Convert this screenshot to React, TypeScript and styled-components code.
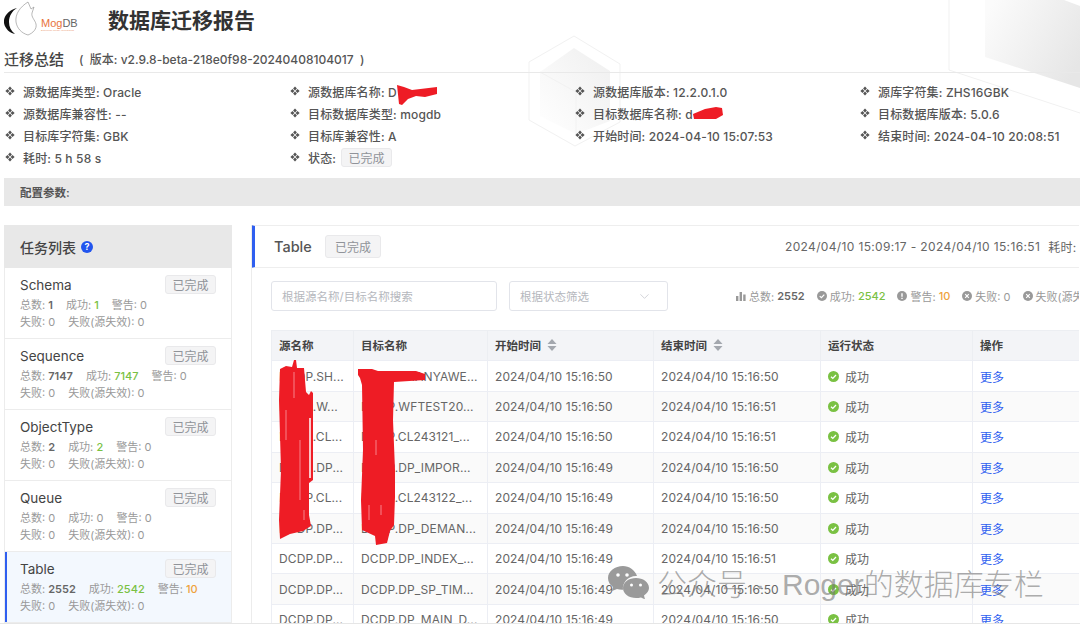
import React from "react";
import styled, { createGlobalStyle } from "styled-components";
import { ChevronDown } from "lucide-react";

const Global = createGlobalStyle`
  html, body { margin: 0; padding: 0; background: #fff; overflow: hidden; }
  body { font-family: Inter, "Noto Sans CJK SC", sans-serif; width: 1080px; height: 626px; }
  * { box-sizing: border-box; }
`;

const Page = styled.div`
  position: relative;
  width: 1080px;
  height: 626px;
  padding-left: 4px;
  overflow: hidden;
`;
const Backdrop = styled.svg`
  position: absolute;
  left: 0;
  top: 0;
  z-index: 0;
  pointer-events: none;
`;
const Overlay = styled.svg`
  position: absolute;
  left: 0;
  top: 0;
  z-index: 3;
  pointer-events: none;
`;
const Content = styled.div`
  position: relative;
  z-index: 1;
`;
const Header = styled.header`
  display: flex;
  align-items: center;
  height: 38px;
`;
const Logo = styled.div`
  display: flex;
  align-items: center;
  width: 104px;
  flex: none;
`;
const LogoWords = styled.div`
  display: flex;
  flex-direction: column;
  margin: 13px 0 0 3px;
`;
const LogoName = styled.span`
  font-family: "Liberation Sans", sans-serif;
  font-size: 11px;
  line-height: 11px;
  color: #e8733c;
  b { font-weight: 400; color: #666; }
`;
const LogoSub = styled.span`
  font-family: "Liberation Sans", sans-serif;
  font-size: 2.5px;
  line-height: 4px;
  color: #eb9a72;
  white-space: nowrap;
`;
const Title = styled.h1`
  margin: 0;
  font-size: 21px;
  font-weight: 700;
  color: #333;
`;
const SummaryHead = styled.div`
  display: flex;
  align-items: center;
  height: 35px;
  padding-top: 7px;
  border-bottom: 1px solid #e9e9e9;
`;
const SummaryTitle = styled.span`
  font-size: 15px;
  font-weight: 500;
  color: #444;
  margin-right: 15px;
`;
const Version = styled.span`
  font-size: 12px;
  font-weight: 500;
  color: #555;
  white-space: pre;
`;
const InfoGrid = styled.div`
  display: grid;
  grid-template-columns: repeat(4, 285px);
  grid-auto-rows: 22px;
  padding-top: 7px;
  height: 105px;
`;
const InfoItem = styled.div`
  display: flex;
  align-items: center;
  font-size: 12px;
  letter-spacing: 0.15px;
  font-weight: 500;
  color: #555;
  white-space: pre;
`;
const DiamondSvg = styled.svg`
  flex: none;
  margin: 0 8px 0 1px;
`;
const Tag = styled.span<{ $large?: boolean }>`
  display: inline-flex;
  align-items: center;
  justify-content: center;
  flex: none;
  width: ${(p) => (p.$large ? "56px" : "51px")};
  height: ${(p) => (p.$large ? "23px" : "19px")};
  background: #f4f4f5;
  border: 1px solid #e9e9eb;
  border-radius: 3px;
  font-size: 12px;
  font-weight: 400;
  letter-spacing: 0;
  color: #909399;
`;
const StateTag = styled(Tag)`
  margin-left: 5px;
`;
const ConfigBar = styled.div`
  display: flex;
  align-items: center;
  height: 28px;
  padding-left: 16px;
  background: #e8e8e8;
  font-size: 11.5px;
  font-weight: 600;
  color: #555;
`;
const Body = styled.div`
  display: flex;
  gap: 19px;
  height: 398px;
  margin-top: 19px;
`;
const Sidebar = styled.aside`
  display: flex;
  flex-direction: column;
  flex: none;
  width: 228px;
  height: 398px;
  border: 1px solid #ececec;
  border-top: 0;
`;
const SideHead = styled.div`
  display: flex;
  align-items: center;
  gap: 5px;
  flex: none;
  height: 43px;
  margin: 0 -1px;
  padding-left: 16px;
  background: #e8e8e8;
  font-size: 14px;
  font-weight: 500;
  color: #444;
`;
const Help = styled.span`
  display: inline-flex;
  align-items: center;
  justify-content: center;
  width: 12px;
  height: 12px;
  border-radius: 50%;
  background: #2255ee;
  color: #fff;
  font-size: 9px;
  font-weight: 700;
`;
const Task = styled.div<{ $active?: boolean }>`
  flex: 1;
  padding: 7px 15px 0 ${(p) => (p.$active ? "13px" : "15px")};
  background: ${(p) => (p.$active ? "#f3f8fe" : "#fff")};
  border-left: ${(p) => (p.$active ? "2px solid #2f5ff0" : "0")};
  border-bottom: 1px solid #ececec;
  &:last-child { border-bottom: 0; }
`;
const TaskTop = styled.div`
  display: flex;
  align-items: center;
  justify-content: space-between;
  height: 19px;
  margin-bottom: 1px;
`;
const TaskName = styled.span`
  font-size: 13.5px;
  color: #444;
`;
const StatLine = styled.div`
  display: flex;
  gap: 13px;
  height: 17px;
  align-items: center;
  font-size: 11px;
  color: #999;
  white-space: nowrap;
`;
const Num = styled.b<{ $tone?: "ok" | "warn" }>`
  font-weight: ${(p) => (p.$tone ? 500 : 600)};
  color: ${(p) => (p.$tone === "ok" ? "#7ac143" : p.$tone === "warn" ? "#efa23c" : "#666")};
`;
const Zero = styled.span`
  font-weight: 400;
`;
const Main = styled.main`
  flex: none;
  width: 828px;
  height: 398px;
  border-left: 1px solid #ececec;
  overflow: hidden;
`;
const MainHead = styled.div`
  display: flex;
  align-items: center;
  height: 43px;
  border-top: 1px solid #eee;
  border-bottom: 1px solid #eee;
  border-left: 4px solid #2f5ff0;
  margin-left: -1px;
  padding-left: 19px;
  white-space: nowrap;
`;
const MainName = styled.span`
  flex: none;
  font-size: 14.5px;
  font-weight: 500;
  color: #555;
  width: 51px;
`;
const TimeText = styled.span`
  flex: none;
  font-size: 12px;
  letter-spacing: 0.35px;
  color: #666;
  margin-left: 404px;
`;
const DurationText = styled(TimeText)`
  margin-left: 8px;
`;
const FilterRow = styled.div`
  display: flex;
  align-items: center;
  height: 30px;
  margin-top: 13px;
  padding-left: 19px;
  white-space: nowrap;
`;
const Field = styled.div<{ $w: number; $mr: number }>`
  display: flex;
  align-items: center;
  justify-content: space-between;
  flex: none;
  width: ${(p) => p.$w}px;
  height: 30px;
  margin-right: ${(p) => p.$mr}px;
  padding: 0 15px 0 10px;
  border: 1px solid #e2e4ea;
  border-radius: 3px;
  font-size: 11.5px;
  color: #b5b7bd;
`;
const Stat = styled.span`
  display: inline-flex;
  align-items: center;
  gap: 3px;
  margin-right: 12px;
  font-size: 11px;
  color: #999;
  flex: none;
`;
const TableWrap = styled.div`
  margin: 19px 0 0 19px;
`;
const cols = "82px 134px 166px 167px 152px 1fr";
const HeadRow = styled.div`
  display: grid;
  grid-template-columns: ${cols};
  height: 30.4px;
  background: #f3f4f7;
  border-top: 1px solid #eceef2;
`;
const Row = styled.div<{ $alt?: boolean }>`
  display: grid;
  grid-template-columns: ${cols};
  height: 30.43px;
  background: ${(p) => (p.$alt ? "#fafafa" : "#fff")};
  border-top: 1px solid #eceef4;
`;
const HeadCell = styled.div`
  display: flex;
  align-items: center;
  gap: 6px;
  padding: 0 0 2px 7px;
  border-left: 1px solid #eceef2;
  font-size: 11.5px;
  font-weight: 600;
  color: #444;
`;
const Cell = styled.div`
  display: flex;
  align-items: center;
  gap: 6px;
  padding-left: 7px;
  border-left: 1px solid #eceef4;
  font-size: 12px;
  letter-spacing: 0.1px;
  color: #666;
  white-space: nowrap;
  overflow: hidden;
`;
const More = styled.a`
  color: #2f5ff0;
  font-size: 12px;
`;
const Watermark = styled.div`
  position: absolute;
  left: 608px;
  top: 562px;
  z-index: 4;
  display: flex;
  align-items: center;
  gap: 8px;
  height: 40px;
  font-family: "Liberation Sans", "Noto Sans CJK SC", sans-serif;
  font-size: 30px;
  font-weight: 300;
  color: rgba(120, 120, 120, 0.62);
  white-space: pre;
`;
const BottomLine = styled.div`
  position: absolute;
  left: 0;
  right: 0;
  top: 623px;
  height: 3px;
  background: #fff;
  border-top: 1px solid #e6e6e6;
  z-index: 2;
`;

const Diamond = () => (
  <DiamondSvg width="10" height="10" viewBox="0 0 10 10" fill="#555">
    <path d="M5 .4 6.9 2.5 5 4.4 3.1 2.5Z" />
    <path d="M5 5.6 6.9 7.5 5 9.6 3.1 7.5Z" />
    <path d="M.4 5 2.5 3.1 4.4 5 2.5 6.9Z" />
    <path d="M9.6 5 7.5 3.1 5.6 5 7.5 6.9Z" />
  </DiamondSvg>
);

const Check = () => (
  <svg width="11" height="11" viewBox="0 0 11 11">
    <circle cx="5.5" cy="5.5" r="5.5" fill="#7ac143" />
    <path d="M3 5.7 4.8 7.4 8 4" fill="none" stroke="#fff" strokeWidth="1.3" />
  </svg>
);
const GrayOk = () => (
  <svg width="10" height="10" viewBox="0 0 10 10">
    <circle cx="5" cy="5" r="5" fill="#999" />
    <path d="M2.7 5.1 4.4 6.7 7.3 3.6" fill="none" stroke="#fff" strokeWidth="1.2" />
  </svg>
);
const GrayWarn = () => (
  <svg width="10" height="10" viewBox="0 0 10 10">
    <circle cx="5" cy="5" r="5" fill="#999" />
    <path d="M5 2.2V5.8M5 6.8V8" stroke="#fff" strokeWidth="1.4" />
  </svg>
);
const GrayX = () => (
  <svg width="10" height="10" viewBox="0 0 10 10">
    <circle cx="5" cy="5" r="5" fill="#999" />
    <path d="M3.2 3.2 6.8 6.8M6.8 3.2 3.2 6.8" stroke="#fff" strokeWidth="1.2" />
  </svg>
);
const Bars = () => (
  <svg width="10" height="10" viewBox="0 0 10 10" fill="#999">
    <rect x="0" y="5" width="2.4" height="5" />
    <rect x="3.6" y="1" width="2.4" height="9" />
    <rect x="7.2" y="3.5" width="2.4" height="6.5" />
  </svg>
);
const Sort = () => (
  <svg width="10" height="12" viewBox="0 0 10 12" fill="#a3a7ae">
    <path d="M5 0 9.5 5H.5Z" />
    <path d="M5 12 .5 7H9.5Z" />
  </svg>
);

const info: [string, string][] = [
  ["源数据库类型", "Oracle"],
  ["源数据库名称", "D"],
  ["源数据库版本", "12.2.0.1.0"],
  ["源库字符集", "ZHS16GBK"],
  ["源数据库兼容性", "--"],
  ["目标数据库类型", "mogdb"],
  ["目标数据库名称", "d"],
  ["目标数据库版本", "5.0.6"],
  ["目标库字符集", "GBK"],
  ["目标库兼容性", "A"],
  ["开始时间", "2024-04-10 15:07:53"],
  ["结束时间", "2024-04-10 20:08:51"],
  ["耗时", "5 h 58 s"],
];

const tasks = [
  { name: "Schema", total: "1", ok: "1", warn: "0" },
  { name: "Sequence", total: "7147", ok: "7147", warn: "0" },
  { name: "ObjectType", total: "2", ok: "2", warn: "0" },
  { name: "Queue", total: "0", ok: "0", warn: "0" },
  { name: "Table", total: "2552", ok: "2542", warn: "10", active: true },
];

const rows = [
  ["DCDP.SH...", "DCDP.SHANYAWE...", "15:16:50", "15:16:50"],
  ["DCDP.W...", "DCDP.WFTEST20...", "15:16:50", "15:16:51"],
  ["DCDP.CL...", "DCDP.CL243121_...", "15:16:50", "15:16:51"],
  ["DCDP.DP...", "DCDP.DP_IMPOR...", "15:16:49", "15:16:50"],
  ["DCDP.CL...", "DCDP.CL243122_...", "15:16:49", "15:16:50"],
  ["DCDP.DP...", "DCDP.DP_DEMAN...", "15:16:49", "15:16:50"],
  ["DCDP.DP...", "DCDP.DP_INDEX_...", "15:16:49", "15:16:51"],
  ["DCDP.DP...", "DCDP.DP_SP_TIM...", "15:16:49", "15:16:50"],
  ["DCDP.DP...", "DCDP.DP_MAIN_D...", "15:16:49", "15:16:50"],
];

export default function App() {
  return (
    <Page>
      <Global />
      <Backdrop width="1080" height="226" viewBox="0 0 1080 226">
        <defs>
          <linearGradient id="cube" x1="1" y1="0" x2="0" y2="1">
            <stop offset="0" stopColor="#efefef" />
            <stop offset="1" stopColor="#ffffff" />
          </linearGradient>
          <linearGradient id="big" x1="1" y1="0.7" x2="0" y2="0.2">
            <stop offset="0" stopColor="#e6e6e6" />
            <stop offset="1" stopColor="#fbfbfb" />
          </linearGradient>
        </defs>
        <path d="M574 36 620 64V122L575 146 529 120V62Z" fill="none" stroke="#f1f1f1" />
        <path d="M574 48 610 71V121L576 134 540 116V72Z" fill="url(#cube)" />
        <path d="M540 72 576 92V134" fill="none" stroke="#f2f2f2" />
        <path d="M949 0V70L1080 113" fill="none" stroke="#f1f1f1" />
        <path d="M985 0V57L1080 88V6L1064 0Z" fill="url(#big)" />
      </Backdrop>
      <Content>
        <Header>
          <Logo>
            <svg width="34" height="36" viewBox="0 0 34 36">
              <path d="M13 7C5 9-1 15 0 22c1 6 6 10 11 11-4-3-6-7-6-12 0-6 3-11 8-14Z" fill="#111" />
              <path d="M24 1c-8 5-13 12-12 20 1 6 5 11 12 13 5-2 9-6 8-11-1-4-5-7-4-11l2-6-3 2Z" fill="none" stroke="#888" strokeWidth="0.6" />
            </svg>
            <LogoWords>
              <LogoName>Mog<b>DB</b></LogoName>
              <LogoSub>Enterprise-Ready openGauss</LogoSub>
            </LogoWords>
          </Logo>
          <Title>数据库迁移报告</Title>
        </Header>
        <SummaryHead>
          <SummaryTitle>迁移总结</SummaryTitle>
          <Version>(  版本: v2.9.8-beta-218e0f98-20240408104017  )</Version>
        </SummaryHead>
        <InfoGrid>
          {info.map(([k, v]) => (
            <InfoItem key={k}>
              <Diamond />
              {k}: {v}
            </InfoItem>
          ))}
          <InfoItem>
            <Diamond />
            状态:
            <StateTag>已完成</StateTag>
          </InfoItem>
        </InfoGrid>
        <ConfigBar>配置参数:</ConfigBar>
        <Body>
          <Sidebar>
            <SideHead>
              任务列表<Help>?</Help>
            </SideHead>
            {tasks.map((t) => (
              <Task key={t.name} $active={t.active}>
                <TaskTop>
                  <TaskName>{t.name}</TaskName>
                  <Tag>已完成</Tag>
                </TaskTop>
                <StatLine>
                  <span>总数: {t.total === "0" ? <Zero>0</Zero> : <Num>{t.total}</Num>}</span>
                  <span>成功: {t.ok === "0" ? <Zero>0</Zero> : <Num $tone="ok">{t.ok}</Num>}</span>
                  <span>警告: {t.warn === "0" ? <Zero>0</Zero> : <Num $tone="warn">{t.warn}</Num>}</span>
                </StatLine>
                <StatLine>
                  <span>失败: 0</span>
                  <span>失败(源失效): 0</span>
                </StatLine>
              </Task>
            ))}
          </Sidebar>
          <Main>
            <MainHead>
              <MainName>Table</MainName>
              <Tag $large>已完成</Tag>
              <TimeText>2024/04/10 15:09:17 - 2024/04/10 15:16:51</TimeText>
              <DurationText>耗时: 7 m 34 s</DurationText>
            </MainHead>
            <FilterRow>
              <Field $w={226} $mr={12}>根据源名称/目标名称搜索</Field>
              <Field $w={159} $mr={68}>
                根据状态筛选
                <ChevronDown size={15} color="#c4c6cc" strokeWidth={1.2} />
              </Field>
              <Stat><Bars />总数: <Num>2552</Num></Stat>
              <Stat><GrayOk />成功: <Num $tone="ok">2542</Num></Stat>
              <Stat><GrayWarn />警告: <Num $tone="warn">10</Num></Stat>
              <Stat><GrayX />失败: 0</Stat>
              <Stat><GrayX />失败(源失效): 0</Stat>
            </FilterRow>
            <TableWrap>
              <HeadRow>
                <HeadCell>源名称</HeadCell>
                <HeadCell>目标名称</HeadCell>
                <HeadCell>开始时间<Sort /></HeadCell>
                <HeadCell>结束时间<Sort /></HeadCell>
                <HeadCell>运行状态</HeadCell>
                <HeadCell>操作</HeadCell>
              </HeadRow>
              {rows.map((r, i) => (
                <Row key={i} $alt={i % 2 === 1}>
                  <Cell>{r[0]}</Cell>
                  <Cell>{r[1]}</Cell>
                  <Cell>2024/04/10 {r[2]}</Cell>
                  <Cell>2024/04/10 {r[3]}</Cell>
                  <Cell><Check />成功</Cell>
                  <Cell><More>更多</More></Cell>
                </Row>
              ))}
            </TableWrap>
          </Main>
        </Body>
      </Content>
      <BottomLine />
      <Overlay width="1080" height="626" viewBox="0 0 1080 626">
        <g fill="#ee1c25">
          <path d="M397 85 404 87 412 90 437 87 437 94 425 97 416 96 408 99 402 105 399 104Z" />
          <path d="M693 114 705 109 716 107 722 108 723 115 716 119 704 119 694 119Z" />
          <path d="M280 369 286 366 292 367 294 360 296 360 297 368 304 368 306 392 309 395 311 391 313 393 313 480 309 483 309 515 311 526 303 531 290 534 280 539 279 520 281 470 279 400Z" />
          <path d="M358 369 372 369 378 371 416 371 425 374 425 380 394 382 393 420 395 470 395 497 394 525 390 531 387 543 376 545 375 536 362 530 361 500 363 450 362 385 360 378 358 375Z" />
        </g>
        <g stroke="#f9a0a4" strokeWidth="0.8" fill="none">
          <path d="M294 372V398M300 440V500M286 410V440M304 510V520M376 440V455M369 505V520M381 505V515" />
        </g>
        <path d="M310 418V478" stroke="#fff" strokeWidth="1.5" />
      </Overlay>
      <Watermark>
        <svg width="41" height="33" viewBox="0 0 41 33" fill="#9a9a9a">
          <path d="M15 0C7 0 0 5 0 12c0 4 2 7 5 9l-1 4 5-2c2 .6 4 1 6 .8C14 17 20 10 28 10h1C27 4 21 0 15 0Z" />
          <path d="M28 12c-7 0-13 4-13 10s6 10 13 10c2 0 3 0 5-.6l4 2-1-4c3-2 5-4.600 5-7.400 0-6-6-10-13-10Z" />
          <g fill="#fff">
            <circle cx="10" cy="9" r="1.800" />
            <circle cx="19" cy="9" r="1.800" />
            <circle cx="23.500" cy="19" r="1.500" />
            <circle cx="32.500" cy="19" r="1.500" />
          </g>
        </svg>
        公众号 ·  Roger的数据库专栏
      </Watermark>
    </Page>
  );
}
